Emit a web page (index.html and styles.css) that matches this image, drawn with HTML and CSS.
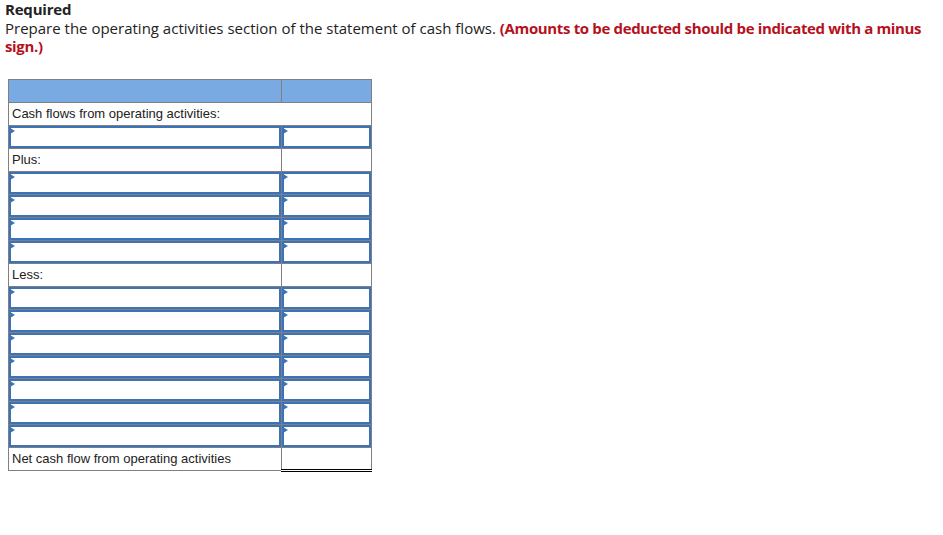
FILE: index.html
```html
<!DOCTYPE html>
<html>
<head>
<meta charset="utf-8">
<link rel="stylesheet" href="styles.css">
</head>
<body>
<div class="prompt">
  <div class="req">Required</div>
  <div class="instr">Prepare the operating activities section of the statement of cash flows. <strong class="note">(Amounts to be deducted should be indicated with a minus sign.)</strong></div>
</div>
<table class="sheet">
  <colgroup><col class="c1"><col class="c2"></colgroup>
  <tr class="head"><td></td><td></td></tr>
  <tr><td colspan="2" class="lbl">Cash flows from operating activities:</td></tr>
  <tr><td class="in"><div class="box"></div></td><td class="in"><div class="box"></div></td></tr>
  <tr><td class="lbl">Plus:</td><td></td></tr>
  <tr><td class="in"><div class="box"></div></td><td class="in"><div class="box"></div></td></tr>
  <tr><td class="in"><div class="box"></div></td><td class="in"><div class="box"></div></td></tr>
  <tr><td class="in"><div class="box"></div></td><td class="in"><div class="box"></div></td></tr>
  <tr><td class="in"><div class="box"></div></td><td class="in"><div class="box"></div></td></tr>
  <tr><td class="lbl">Less:</td><td></td></tr>
  <tr><td class="in"><div class="box"></div></td><td class="in"><div class="box"></div></td></tr>
  <tr><td class="in"><div class="box"></div></td><td class="in"><div class="box"></div></td></tr>
  <tr><td class="in"><div class="box"></div></td><td class="in"><div class="box"></div></td></tr>
  <tr><td class="in"><div class="box"></div></td><td class="in"><div class="box"></div></td></tr>
  <tr><td class="in"><div class="box"></div></td><td class="in"><div class="box"></div></td></tr>
  <tr><td class="in"><div class="box"></div></td><td class="in"><div class="box"></div></td></tr>
  <tr><td class="in"><div class="box"></div></td><td class="in"><div class="box"></div></td></tr>
  <tr><td class="lbl">Net cash flow from operating activities</td><td class="total"></td></tr>
</table>
</body>
</html>
```
FILE: styles.css
```css
html, body {
  margin: 0;
  padding: 0;
  background: #fff;
}
body {
  font-family: "Open Sans", "Liberation Sans", sans-serif;
  color: #222;
}
.prompt {
  padding: 0 5px;
  font-size: 15px;
  line-height: 18.5px;
}
.req {
  font-weight: bold;
  letter-spacing: -0.2px;
}
.note {
  color: #b5111d;
  font-weight: bold;
  letter-spacing: -0.35px;
}
.sheet {
  margin: 23px 0 0 8px;
  border-collapse: collapse;
  table-layout: fixed;
  width: 363px;
  font-family: "Liberation Sans", Arial, sans-serif;
  font-size: 13px;
  color: #222;
}
.c1 { width: 273px; }
.c2 { width: 90px; }
.sheet td {
  border: 1px solid #808080;
  height: 22px;
  padding: 0;
  box-sizing: border-box;
}
.sheet tr { height: 23px; }
.head td {
  background: #79abe2;
}
.lbl {
  padding-left: 3px !important;
  vertical-align: middle;
}
.in {
  vertical-align: top;
}
.box {
  position: relative;
  height: 22px;
  box-sizing: border-box;
  border: 2px solid #3b72b8;
}
.box::before {
  content: "";
  position: absolute;
  left: -1px;
  top: 0;
  border-left: 5px solid #3b72b8;
  border-top: 3px solid transparent;
  border-bottom: 3px solid transparent;
}
.sheet td.total {
  border-bottom: 3px double #000;
}
```
